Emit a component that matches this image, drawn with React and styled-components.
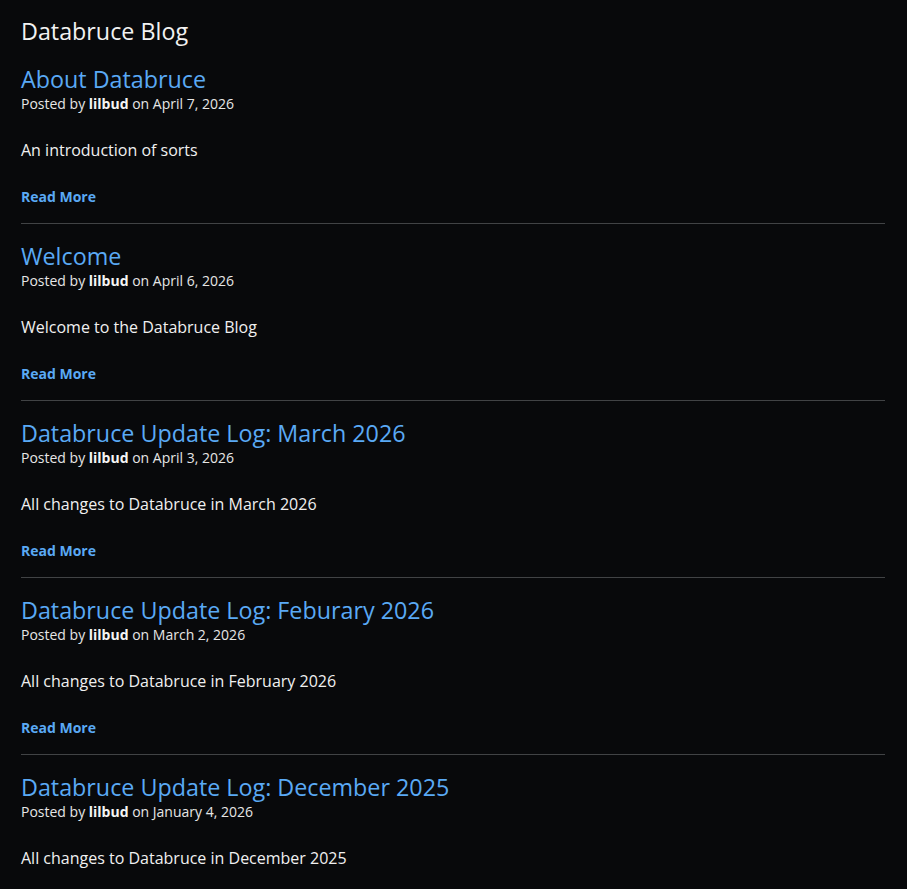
import React from 'react';
import styled, { createGlobalStyle } from 'styled-components';

const GlobalStyle = createGlobalStyle`
    html, body {
        margin: 0;
        background: #08090b;
        color: #f0f0f0;
        font-family: "Open Sans", Roboto, sans-serif;
    }
`

const Page = styled.div`
    padding: 16px 22px 20px 21px;
`

const Heading = styled.h1`
    font-size: 23.3px;
    line-height: 30px;
    font-weight: 400;
    margin: 0 0 18px;
    color: #f2f2f2;
`

const Post = styled.article`
    display: flex;
    flex-direction: column;
    align-items: flex-start;
    padding-bottom: 16px;
    margin-bottom: 17px;
    border-bottom: 1px solid ${p => (p.$last ? 'transparent' : '#414345')};
`

const Title = styled.a`
    font-size: 23.3px;
    line-height: 30px;
    color: #5aa9f5;
    text-decoration: none;
`

const Meta = styled.div`
    font-size: 14px;
    line-height: 20px;
    color: #e6e6e6;

    b {
        font-weight: 700;
        color: #f5f5f5;
    }
`

const Summary = styled.p`
    font-size: 16px;
    line-height: 24px;
    margin: 24px 0 25px;
    color: #f0f0f0;
`

const ReadMore = styled.a`
    font-size: 14px;
    line-height: 20px;
    font-weight: 700;
    color: #5aa9f5;
    text-decoration: none;
`

const posts = [
    { title: 'About Databruce', date: 'April 7, 2026', summary: 'An introduction of sorts' },
    { title: 'Welcome', date: 'April 6, 2026', summary: 'Welcome to the Databruce Blog' },
    { title: 'Databruce Update Log: March 2026', date: 'April 3, 2026', summary: 'All changes to Databruce in March 2026' },
    { title: 'Databruce Update Log: Feburary 2026', date: 'March 2, 2026', summary: 'All changes to Databruce in February 2026' },
    { title: 'Databruce Update Log: December 2025', date: 'January 4, 2026', summary: 'All changes to Databruce in December 2025' },
]

export default function App() {
    return (
        <Page>
            <GlobalStyle />
            <Heading>Databruce Blog</Heading>
            {posts.map((post, i) => (
                <Post key={post.title} $last={i === posts.length - 1}>
                    <Title href="#">{post.title}</Title>
                    <Meta>Posted by <b>lilbud</b> on {post.date}</Meta>
                    <Summary>{post.summary}</Summary>
                    <ReadMore href="#">Read More</ReadMore>
                </Post>
            ))}
        </Page>
    )
}
